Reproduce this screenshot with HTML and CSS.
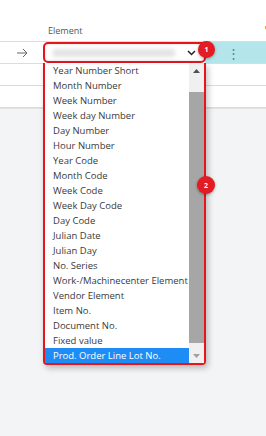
FILE: index.html
```html
<!DOCTYPE html>
<html lang="en">
<head>
  <meta charset="UTF-8" />
  <meta name="viewport" content="width=device-width, initial-scale=1.0" />
  <title>Element lookup</title>
  <link rel="stylesheet" href="styles.css">
</head>
<body>
  <div class="sheet">
    <div class="head">
      <span class="head-title">Element</span>
      <span class="head-mark"></span>
    </div>
    <div class="row row-active">
      <span class="arrow">
        <svg width="12" height="10" viewBox="0 0 12 10"><path d="M1 5h10M7 1l4 4-4 4" fill="none" stroke="#666" stroke-width="1"/></svg>
      </span>
      <span class="cell-fill"></span>
      <span class="cell-more">&#8942;</span>
    </div>
    <div class="row"></div>
    <div class="row"></div>
  </div>

  <div class="picker">
    <div class="picker-box">
      <span class="picker-blur"></span>
      <svg class="picker-chev" width="9" height="6" viewBox="0 0 9 6"><path d="M1 1l3.5 3.5L8 1" fill="none" stroke="#222" stroke-width="1.5"/></svg>
    </div>
    <div class="picker-list">
      <ul class="options">
        <li>Year Number Short</li>
        <li>Month Number</li>
        <li>Week Number</li>
        <li>Week day Number</li>
        <li>Day Number</li>
        <li>Hour Number</li>
        <li>Year Code</li>
        <li>Month Code</li>
        <li>Week Code</li>
        <li>Week Day Code</li>
        <li>Day Code</li>
        <li>Julian Date</li>
        <li>Julian Day</li>
        <li>No. Series</li>
        <li>Work-/Machinecenter Element</li>
        <li>Vendor Element</li>
        <li>Item No.</li>
        <li>Document No.</li>
        <li>Fixed value</li>
        <li class="selected">Prod. Order Line Lot No.</li>
      </ul>
      <div class="scroll">
        <span class="scroll-btn"><svg width="7" height="4" viewBox="0 0 7 4"><path d="M0 4L3.5 0 7 4z" fill="#505050"/></svg></span>
        <span class="scroll-track"><span class="scroll-thumb"></span></span>
        <span class="scroll-btn"><svg width="7" height="4" viewBox="0 0 7 4"><path d="M0 0h7L3.5 4z" fill="#a0a0a0"/></svg></span>
      </div>
    </div>
  </div>

  <span class="badge badge-one">1</span>
  <span class="badge badge-two">2</span>
</body>
</html>
```

FILE: styles.css
```css
body {
  margin: 0;
  background: #f3f4f6;
  font-family: "Open Sans", "Noto Sans", sans-serif;
  color: #333;
}

.sheet {
  background: #fff;
  border-bottom: 1px solid #e2e2e2;
}

.head {
  height: 42px;
  display: flex;
  align-items: flex-end;
  justify-content: space-between;
  border-bottom: 1px solid #dcdcdc;
  box-sizing: border-box;
  padding: 0 0 4px 48px;
}

.head-title {
  font-size: 9px;
  color: #555;
}

.head-mark {
  width: 1px;
  height: 3px;
  background: #e8a23c;
  margin-bottom: 8px;
}

.row {
  height: 21px;
  border-bottom: 1px solid #dcdcdc;
  display: flex;
  align-items: center;
}

.arrow {
  width: 43px;
  padding-left: 16px;
  box-sizing: border-box;
  display: flex;
}

.cell-fill {
  flex: 0 0 162px;
}

.cell-more {
  flex: 1;
  align-self: stretch;
  background: #b3e5ea;
  color: #5a7f95;
  font-size: 13px;
  display: flex;
  align-items: center;
  justify-content: center;
  padding-right: 4px;
}

.picker {
  position: absolute;
  left: 43px;
  top: 42px;
  width: 163px;
}

.picker-box {
  height: 21px;
  box-sizing: border-box;
  border: 2px solid #e8141c;
  border-radius: 5px;
  background: #fff;
  display: flex;
  align-items: center;
  padding: 0 6px;
  box-shadow: inset 0 0 3px rgba(0, 0, 0, 0.15);
}

.picker-blur {
  width: 122px;
  height: 8px;
  margin-left: 2px;
  background: #e3e3e3;
  filter: blur(2px);
}

.picker-chev {
  margin-left: auto;
  margin-right: 2px;
}

.picker-list {
  display: flex;
  border: 2px solid #e8141c;
  border-top: none;
  border-radius: 0 0 4px 4px;
  background: #fff;
  box-shadow: 2px 3px 6px rgba(0, 0, 0, 0.25);
}

.options {
  list-style: none;
  margin: 0;
  padding: 0;
  flex: 1;
}

.options li {
  font-size: 9.5px;
  line-height: 15px;
  height: 15px;
  padding-left: 8px;
  white-space: nowrap;
  color: #3a3a3a;
}

.options li.selected {
  background: #1e8cf5;
  color: #fff;
}

.scroll {
  width: 15px;
  display: flex;
  flex-direction: column;
  background: #f0f0f0;
}

.scroll-btn {
  height: 15px;
  display: flex;
  align-items: center;
  justify-content: center;
}

.scroll-track {
  flex: 1;
  display: flex;
  flex-direction: column;
  padding: 14px 0 5px;
}

.scroll-thumb {
  flex: 1;
  background: #a6a6a6;
}

.badge {
  position: absolute;
  width: 17px;
  height: 17px;
  border-radius: 50%;
  background: #e31b23;
  color: #fff;
  font-size: 7px;
  font-weight: bold;
  display: flex;
  align-items: center;
  justify-content: center;
  box-shadow: 0 1px 3px rgba(0, 0, 0, 0.35);
}

.badge-one {
  left: 198px;
  top: 41px;
}

.badge-two {
  left: 197px;
  top: 176px;
  width: 18px;
  height: 18px;
}
```
